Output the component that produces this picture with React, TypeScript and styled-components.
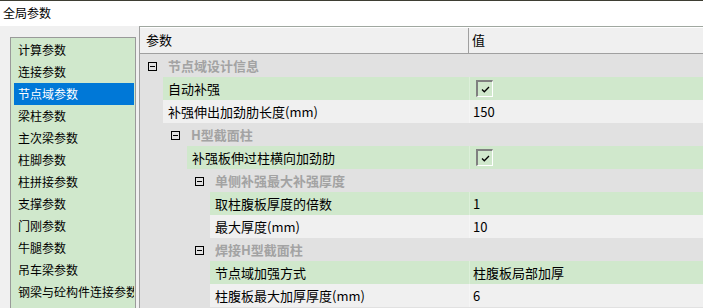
import styled, { createGlobalStyle } from "styled-components";

interface Item {
  kind: "group" | "prop",
  level: number,
  name: string,
  value?: string,
  check?: boolean,
  tint?: "green" | "plain",
}

const menu = [
  "计算参数", "连接参数", "节点域参数", "梁柱参数", "主次梁参数", "柱脚参数",
  "柱拼接参数", "支撑参数", "门刚参数", "牛腿参数", "吊车梁参数", "钢梁与砼构件连接参数",
]

const rows: Item[] = [
  { kind: "group", level: 1, name: "节点域设计信息" },
  { kind: "prop", level: 1, name: "自动补强", check: true, tint: "green" },
  { kind: "prop", level: 1, name: "补强伸出加劲肋长度(mm)", value: "150", tint: "plain" },
  { kind: "group", level: 2, name: "H型截面柱" },
  { kind: "prop", level: 2, name: "补强板伸过柱横向加劲肋", check: true, tint: "green" },
  { kind: "group", level: 3, name: "单侧补强最大补强厚度" },
  { kind: "prop", level: 3, name: "取柱腹板厚度的倍数", value: "1", tint: "green" },
  { kind: "prop", level: 3, name: "最大厚度(mm)", value: "10", tint: "plain" },
  { kind: "group", level: 3, name: "焊接H型截面柱" },
  { kind: "prop", level: 3, name: "节点域加强方式", value: "柱腹板局部加厚", tint: "green" },
  { kind: "prop", level: 3, name: "柱腹板最大加厚厚度(mm)", value: "6", tint: "plain" },
]

const indents = [0, 23, 47, 70]

const App = () => {
  return (
    <>
      <GlobalStyle />
      <Window>
        <TitleBar>全局参数</TitleBar>
        <Body>
          <SidePanel>
            {menu.map((m, i) => (
              <SideItem key={m} selected={i === 2}>{m}</SideItem>
            ))}
          </SidePanel>
          <Grid>
            <HeaderRow>
              <HeadCell>参数</HeadCell>
              <HeadValue>值</HeadValue>
            </HeaderRow>
            {rows.map((r) =>
              r.kind === "group" ? (
                <GroupRow key={r.name} level={r.level}>
                  <Toggle />
                  <GroupLabel>{r.name}</GroupLabel>
                </GroupRow>
              ) : (
                <PropRow key={r.name}>
                  <Indent style={{ width: indents[r.level] }} />
                  <NameCell tint={r.tint}>{r.name}</NameCell>
                  <ValueCell tint={r.tint}>
                    {r.check ? (
                      <CheckBox>
                        <svg width="9" height="7" viewBox="0 0 9 7">
                          <path d="M1 3.5 L3.3 5.8 L8 1" fill="none" stroke="#000" strokeWidth="1.3" />
                        </svg>
                      </CheckBox>
                    ) : (
                      r.value
                    )}
                  </ValueCell>
                </PropRow>
              )
            )}
          </Grid>
        </Body>
      </Window>
    </>
  );
}

export default App;

const GlobalStyle = createGlobalStyle`
  html, body {
    margin: 0;
    padding: 0;
    background: #f0f0f0;
  }
  * {
    box-sizing: border-box;
  }
`

const Window = styled.div`
  width: 703px;
  height: 308px;
  overflow: hidden;
  display: flex;
  flex-direction: column;
  background: #f0f0f0;
  font-family: "Noto Sans CJK SC", "Microsoft YaHei", sans-serif;
  color: #000;
`

const TitleBar = styled.div`
  height: 26px;
  border-top: 1px solid #3e3e33;
  background: #ffffff;
  padding-left: 3px;
  font-size: 12px;
  line-height: 24px;
`

const Body = styled.div`
  flex: 1;
  display: flex;
  gap: 3px;
  padding-left: 10px;
  min-height: 0;
`

const SidePanel = styled.div`
  width: 126px;
  margin-top: 11px;
  border: 1px solid #9a9a9a;
  border-bottom: none;
  background: #d0e8cc;
  padding: 1px 1px 0 3px;
  display: flex;
  flex-direction: column;
`

const SideItem = styled.div<{ selected: boolean }>`
  height: 22px;
  line-height: 22px;
  padding-left: 4px;
  font-size: 12px;
  white-space: nowrap;
  overflow: hidden;
  background: ${(p) => (p.selected ? "#0078d7" : "transparent")};
  color: ${(p) => (p.selected ? "#ffffff" : "#000")};
`

const Grid = styled.div`
  flex: 1;
  border-left: 1px solid #a0a0a0;
  border-top: 1px solid #a0a8a0;
  background: #e1e1e1;
  display: flex;
  flex-direction: column;
`

const HeaderRow = styled.div`
  height: 27px;
  display: flex;
  background: #f0f0f0;
  border-top: 1px solid #ffffff;
  border-bottom: 1px solid #a0a0a0;
  font-size: 13px;
  line-height: 24px;
`

const HeadCell = styled.div`
  width: 329px;
  padding-left: 6px;
  border-right: 1px solid #a0a0a0;
`

const HeadValue = styled.div`
  flex: 1;
  padding-left: 3px;
`

const GroupRow = styled.div<{ level: number }>`
  height: 23px;
  display: flex;
  align-items: center;
  gap: 11px;
  padding-left: ${(p) => indents[p.level - 1] + 8}px;
  background: #e1e1e1;
`

const Toggle = styled.div`
  width: 9px;
  height: 9px;
  border: 1px solid #000;
  position: relative;
  margin-top: 1px;
  &::after {
    content: "";
    position: absolute;
    left: 1px;
    right: 1px;
    top: 3px;
    height: 1px;
    background: #000;
  }
`

const GroupLabel = styled.span`
  font-size: 13px;
  font-weight: bold;
  color: #a3a3a3;
`

const PropRow = styled.div`
  height: 23px;
  display: flex;
  font-size: 13px;
  line-height: 23px;
`

const Indent = styled.div`
  background: #e1e1e1;
  flex-shrink: 0;
`

const tintColor = (t?: string) => (t === "green" ? "#d0e8cc" : "#f0f0f0")

const NameCell = styled.div<{ tint?: string }>`
  flex: 1;
  padding-left: 5px;
  white-space: nowrap;
  background: ${(p) => tintColor(p.tint)};
`

const ValueCell = styled.div<{ tint?: string }>`
  width: 234px;
  flex-shrink: 0;
  display: flex;
  align-items: center;
  padding-left: 3px;
  border-left: 1px solid ${(p) => (p.tint === "green" ? "#dcefd9" : "#f5f5f5")};
  background: ${(p) => tintColor(p.tint)};
`

const CheckBox = styled.div`
  width: 17px;
  height: 17px;
  margin-left: 3px;
  border-top: 2px solid #808080;
  border-left: 2px solid #808080;
  border-right: 1px solid #ffffff;
  border-bottom: 1px solid #ffffff;
  display: flex;
  align-items: center;
  justify-content: center;
`
